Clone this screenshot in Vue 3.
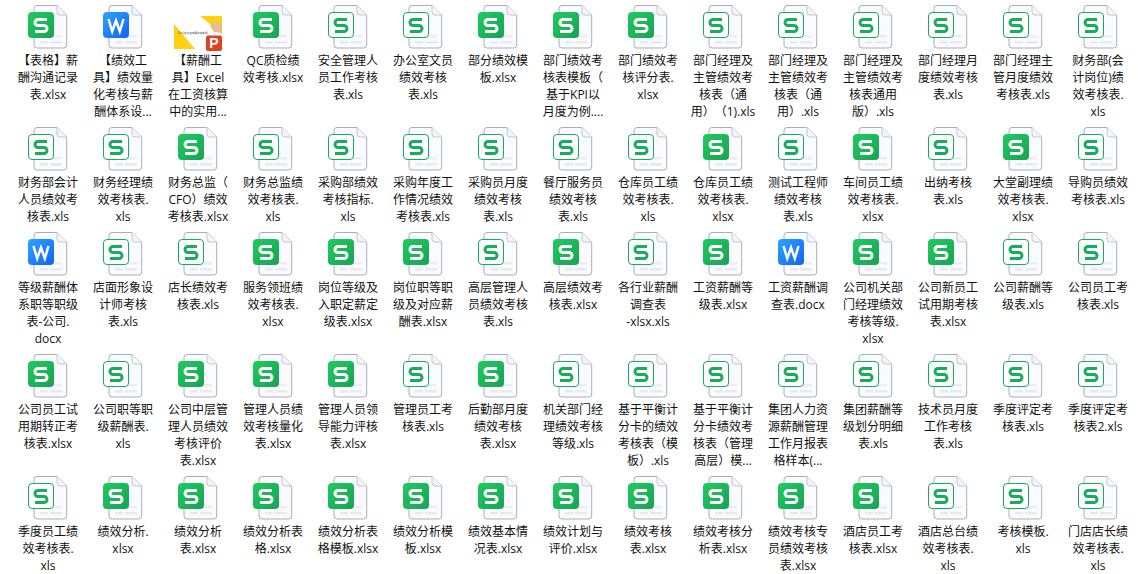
<script setup>
const raw = `s|【表格】薪/酬沟通记录/表.xlsx
w|【绩效工/具】绩效量/化考核与薪/酬体系设...
p|【薪酬工/具】Excel/在工资核算/中的实用...
s|QC质检绩/效考核.xlsx
o|安全管理人/员工作考核/表.xls
o|办公室文员/绩效考核/表.xls
s|部分绩效模/板.xlsx
s|部门绩效考/核表模板（/基于KPI以/月度为例....
s|部门绩效考/核评分表./xlsx
o|部门经理及/主管绩效考/核表（通/用）（1).xls
o|部门经理及/主管绩效考/核表（通/用）.xls
o|部门经理及/主管绩效考/核表通用/版）.xls
o|部门经理月/度绩效考核/表.xls
o|部门经理主/管月度绩效/考核表.xls
o|财务部(会/计岗位)绩/效考核表./xls
o|财务部会计/人员绩效考/核表.xls
o|财务经理绩/效考核表./xls
s|财务总监（/CFO）绩效/考核表.xlsx
o|财务总监绩/效考核表./xls
o|采购部绩效/考核指标./xls
o|采购年度工/作情况绩效/考核表.xls
o|采购员月度/绩效考核/表.xls
o|餐厅服务员/绩效考核/表.xls
o|仓库员工绩/效考核表./xls
s|仓库员工绩/效考核表./xlsx
o|测试工程师/绩效考核/表.xls
s|车间员工绩/效考核表./xlsx
o|出纳考核/表.xls
s|大堂副理绩/效考核表./xlsx
o|导购员绩效/考核表.xls
w|等级薪酬体/系职等职级/表-公司./docx
o|店面形象设/计师考核/表.xls
o|店长绩效考/核表.xls
s|服务领班绩/效考核表./xlsx
s|岗位等级及/入职定薪定/级表.xlsx
s|岗位职等职/级及对应薪/酬表.xlsx
o|高层管理人/员绩效考核/表.xls
s|高层绩效考/核表.xlsx
o|各行业薪酬/调查表/-xlsx.xls
s|工资薪酬等/级表.xlsx
w|工资薪酬调/查表.docx
s|公司机关部/门经理绩效/考核等级./xlsx
s|公司新员工/试用期考核/表.xlsx
o|公司薪酬等/级表.xls
o|公司员工考/核表.xls
s|公司员工试/用期转正考/核表.xlsx
o|公司职等职/级薪酬表./xls
s|公司中层管/理人员绩效/考核评价/表.xlsx
s|管理人员绩/效考核量化/表.xlsx
s|管理人员领/导能力评核/表.xlsx
o|管理员工考/核表.xls
s|后勤部月度/绩效考核/表.xlsx
o|机关部门经/理绩效考核/等级.xls
o|基于平衡计/分卡的绩效/考核表（模/板）.xls
o|基于平衡计/分卡绩效考/核表（管理/高层）模...
o|集团人力资/源薪酬管理/工作月报表/格样本(...
o|集团薪酬等/级划分明细/表.xls
o|技术员月度/工作考核/表.xls
o|季度评定考/核表.xls
o|季度评定考/核表2.xls
o|季度员工绩/效考核表./xls
s|绩效分析./xlsx
s|绩效分析/表.xlsx
s|绩效分析表/格.xlsx
s|绩效分析表/格模板.xlsx
s|绩效分析模/板.xlsx
s|绩效基本情/况表.xlsx
s|绩效计划与/评价.xlsx
s|绩效考核/表.xlsx
s|绩效考核分/析表.xlsx
s|绩效考核专/员绩效考核/表.xlsx
s|酒店员工考/核表.xlsx
o|酒店总台绩/效考核表./xls
o|考核模板./xls
o|门店店长绩/效考核表./xls`
const files = raw.split('\n').map((row, id) => {
  const [type, text] = row.split('|')
  return { id, type, lines: text.split('/') }
})
const S = 'M23 19.5H14a3 3 0 0 0 0 6h6a3 3 0 0 1 0 6H11'
</script>

<template>
  <div class="grid">
    <div v-for="f in files" :key="f.id" class="file">
      <svg class="icon" width="48" height="48" viewBox="0 0 48 48">
        <defs>
          <linearGradient :id="'g' + f.id" x1="0" y1="0" x2="1" y2="1">
            <stop offset="0" :stop-color="f.type === 'w' ? '#2da3ff' : '#1fcb5f'" />
            <stop offset="1" :stop-color="f.type === 'w' ? '#1263f4' : '#18a354'" />
          </linearGradient>
        </defs>
        <template v-if="f.type === 'p'">
          <path d="M0 24L0 49H21Z" fill="#ffd111" />
          <path d="M26 16H48V34Z" fill="#ffd111" />
          <path d="M36 26l5-5 7 3v9l-8-1z" fill="#e8bd8c" />
          <text x="4" y="34" class="thumb">Excel在工资核算中的实用</text>
          <rect x="32" y="35.500" width="16" height="15.500" rx="2" fill="#e2401f" />
          <text x="40" y="48" class="pp">P</text>
        </template>
        <template v-else>
          <path d="M13 5.5H33L42.7 15V45a3 3 0 0 1-3 3H13a3 3 0 0 1-3-3V8.500a3 3 0 0 1 3-3Z" fill="#fafbfe" stroke="#a9aeb9" />
          <path d="M33 5.500V12a3 3 0 0 0 3 3H42.700" fill="#f3f5f9" stroke="#c3c7cf" />
          <rect x="29" y="35" width="9" height="2.500" fill="#eceef2" />
          <rect x="16" y="41" width="8" height="2.500" fill="#e8eaee" />
          <rect x="26" y="41" width="12" height="2.500" fill="#e8eaee" />
          <template v-if="f.type === 'o'">
            <rect x="4.500" y="12.500" width="25" height="25" rx="3.500" fill="#fff" stroke="#17ad5c" />
            <path :d="S" fill="none" stroke="#17ad5c" stroke-width="3" />
          </template>
          <template v-else>
            <rect x="4" y="12" width="26" height="26" rx="4" :fill="'url(#g' + f.id + ')'" />
            <path v-if="f.type === 's'" :d="S" fill="none" stroke="#fff" stroke-width="3" />
            <path v-else d="M9.500 19L13.200 31.500L17 20.500L20.800 31.500L24.500 19" fill="none" stroke="#fff" stroke-width="2.500" />
          </template>
        </template>
      </svg>
      <div class="label">
        <div v-for="(line, i) in f.lines" :key="i" class="line">{{ line }}</div>
      </div>
    </div>
  </div>
</template>

<style scoped>
.grid {
  display: grid;
  grid-template-columns: repeat(15, 75px);
  align-items: start;
  padding-left: 10px;
  height: 574px;
  overflow: hidden;
  box-sizing: border-box;
  font-family: "Open Sans", "Noto Sans CJK SC", sans-serif;
  font-size: 12px;
  line-height: 17px;
  color: #111;
  background: #fff;
  text-spacing-trim: space-all;
}
.file {
  display: flex;
  flex-direction: column;
  align-items: center;
  padding: 0 0 2px 1px;
  min-width: 0;
}
.icon {
  display: block;
  flex: none;
  overflow: visible;
}
.label {
  margin-top: 4px;
  text-align: center;
}
.line {
  white-space: nowrap;
}
.thumb {
  font-size: 2.600px;
  fill: #444;
}
.pp {
  font-family: "Liberation Sans", sans-serif;
  font-size: 14px;
  font-weight: 700;
  fill: #fff;
  text-anchor: middle;
}
</style>

<style>
html, body {
  margin: 0;
  overflow: hidden;
  background: #fff;
}
</style>
